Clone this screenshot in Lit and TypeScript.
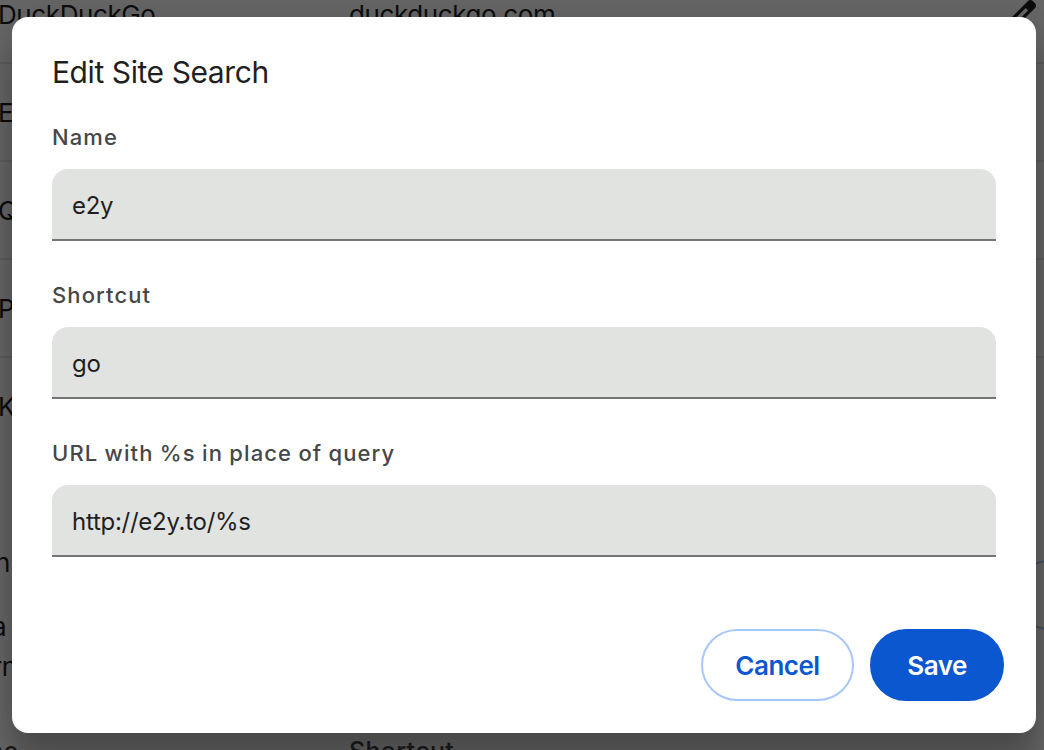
import { LitElement, html, css, svg } from "lit";
import { customElement, property } from "lit/decorators.js";

@customElement("text-field")
class TextField extends LitElement {
  @property() label = "";
  @property() value = "";

  static styles = css`
    :host { display: block; height: 158px; }
    .label {
      height: 32px; line-height: 32px; margin-bottom: 16px;
      font-size: 22px; font-weight: 500; letter-spacing: 1.1px; word-spacing: -0.65px; color: #474747;
    }
    .box {
      box-sizing: border-box; height: 72px; padding: 2px 20px 0; position: relative; z-index: 0;
      border-bottom: 2px solid #757575; color: #1f1f1f; font-size: 24px; line-height: 70px;
    }
    .fill { position: absolute; inset: 0; z-index: -1; background: #e1e3e1; border-radius: 16px 16px 0 0; }
    .value { letter-spacing: -0.27px; }
  `;

  render() {
    return html`
      <div class="label">${this.label}</div>
      <div class="box"><div class="fill"></div><span class="value">${this.value}</span></div>
    `;
  }
}

@customElement("app-root")
class AppRoot extends LitElement {
  static styles = css`
    :host {
      display: block; position: relative; width: 1044px; height: 750px; overflow: hidden;
      font-family: Inter, "Liberation Sans", sans-serif; background: #fff; color: #1f1f1f;
    }
    .page { margin: -36px 0 0 -2px; font-size: 26px; letter-spacing: -0.4px; white-space: nowrap; }
    .row {
      box-sizing: border-box; height: 98px; display: grid; grid-template-columns: 351px 1fr 43px;
      align-items: center; padding-top: 3px;
    }
    .row + .row { border-top: 2px solid #e9e9e9; padding-top: 1px; }
    .pencil { width: 40px; height: 40px; display: block; }
    .about { display: flex; justify-content: space-between; height: 281px; padding-top: 73px; box-sizing: border-box; }
    .copy { margin-left: -6px; line-height: 40px; }
    .copy p { margin: 0; }
    .copy .first { margin: 16px 0 24px 3px; }
    .add { box-sizing: border-box; width: 140px; height: 70px; border: 2px solid #a8c7fa; border-radius: 35px; margin: 33px -110px 0 0; }
    .head { display: grid; grid-template-columns: 351px 1fr; line-height: 32px; font-size: 25px; letter-spacing: 0.3px; font-weight: 500; color: #474747; }
    .clipped { margin-left: -17px; }
    .veil { position: absolute; inset: 0; background: rgba(0, 0, 0, 0.6); }
    .dialog {
      position: absolute; left: 12px; top: 17px; width: 1024px; height: 716px;
      box-sizing: border-box; padding: 36px 40px 32px; border-radius: 16px; background: #fff;
      box-shadow: 0 0 32px rgba(0, 0, 0, 0.12), 0 32px 32px rgba(0, 0, 0, 0.24);
      display: flex; flex-direction: column;
    }
    .title { margin: 0 0 30px; font-size: 30px; letter-spacing: -0.42px; line-height: 38px; font-weight: 400; white-space: nowrap; }
    .fields { height: 472px; margin-bottom: 36px; }
    .actions { display: flex; gap: 16px; margin-right: -8px; justify-content: flex-end; }
    .btn {
      box-sizing: border-box; height: 72px; border-radius: 36px; border: 2px solid #a8c7fa; padding: 0;
      font: 600 26px/70px Inter, "Liberation Sans", sans-serif; letter-spacing: -0.5px;
      color: #0b57d0; background: #fff; text-align: center;
    }
    .cancel { width: 153px; }
    .save { width: 134px; color: #fff; background: #0b57d0; border-color: #0b57d0; }
  `;

  rows = [
    ["DuckDuckGo", "duckduckgo.com"],
    ["E", ""],
    ["Q", ""],
    ["P", ""],
    ["K", ""],
  ];

  pencil = svg`<path fill="#1f1f1f" d="M200-200h57l391-391-57-57-391 391v57Zm-80 80v-170l528-527q12-11 26.5-17t30.5-6q16 0 31 6t26 18l55 56q12 11 17.5 26t5.5 30q0 16-5.500 30.500T817-647L290-120H120Z"/>`;

  render() {
    return html`
      <div class="page">
        ${this.rows.map(
          ([name, key], i) => html`<div class="row">
            <span>${name}</span><span>${key}</span>
            ${i === 0 ? html`<svg class="pencil" viewBox="0 -960 960 960">${this.pencil}</svg>` : ""}
          </div>`
        )}
        <div class="about">
          <div class="copy"><p class="first">n</p><p>a</p><p>rn</p></div>
          <div class="add"></div>
        </div>
        <div class="head"><span class="clipped">me</span><span>Shortcut</span></div>
      </div>
      <div class="veil"></div>
      <div class="dialog">
        <h2 class="title">Edit Site Search</h2>
        <div class="fields">
          <text-field label="Name" value="e2y"></text-field>
          <text-field label="Shortcut" value="go"></text-field>
          <text-field label="URL with %s in place of query" value="http://e2y.to/%s"></text-field>
        </div>
        <div class="actions">
          <button class="btn cancel">Cancel</button>
          <button class="btn save">Save</button>
        </div>
      </div>
    `;
  }
}
